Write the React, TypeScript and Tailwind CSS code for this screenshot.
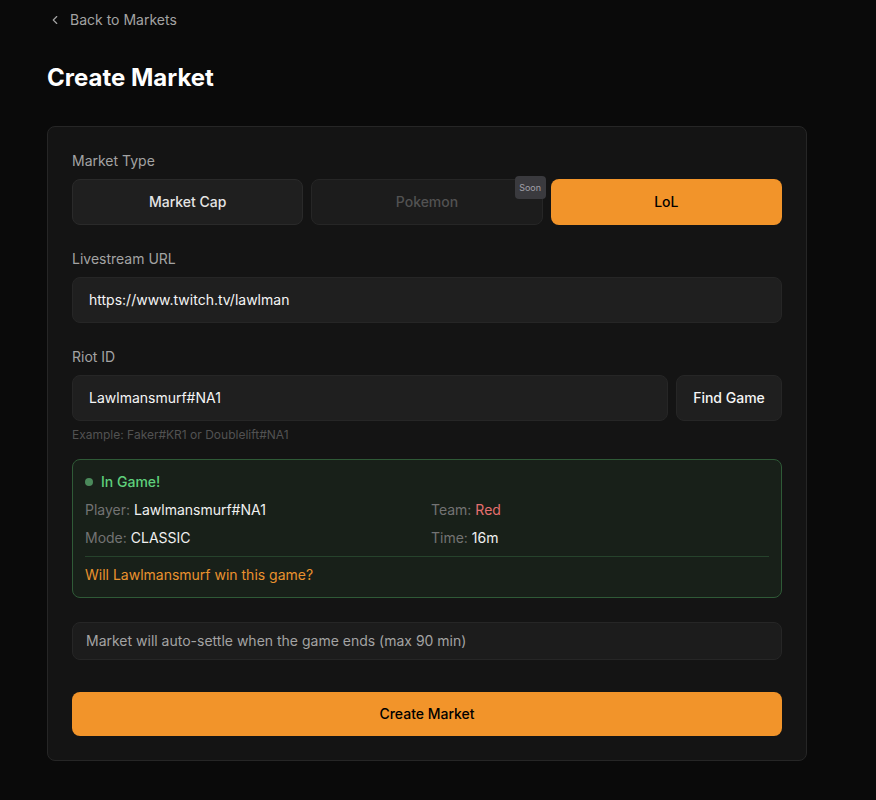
import React from "react";

export default function App() {
  return (
    <div
      className="min-h-[800px] w-full bg-[#0a0a0a] text-white"
      style={{ fontFamily: "Inter, 'Noto Sans', sans-serif" }}
    >
      <div className="pl-[47px] pt-[10px] pb-10">
        <button className="flex h-5 items-center gap-[8px] pl-[1px] text-sm text-[#a3a3a3]">
          <svg width="14" height="14" viewBox="0 0 24 24" fill="none" stroke="currentColor" strokeWidth="2" strokeLinecap="round" strokeLinejoin="round">
            <path d="m15 18-6-6 6-6" />
          </svg>
          <span>Back to Markets</span>
        </button>

        <h1 className="mt-8 text-2xl font-bold leading-8 text-white">Create Market</h1>

        <div className="mt-8 w-[760px] rounded-lg border border-[#262626] bg-[#141414] p-6">
          <div className="text-sm leading-5 text-[#a3a3a3]">Market Type</div>
          <div className="mt-2 grid grid-cols-3 gap-2">
            <button className="h-[46px] rounded-lg border border-[#2a2a2a] bg-[#1f1f1f] text-sm font-medium text-[#e5e5e5]">
              Market Cap
            </button>
            <div className="relative">
              <button className="h-[46px] w-full rounded-lg border border-[#262626] bg-[#1c1c1c] text-sm font-medium text-[#525252]">
                Pokemon
              </button>
              <span className="absolute right-[-3px] top-[-3px] flex h-[23px] w-[31px] items-center justify-center rounded bg-[#3a3a3e] text-[9px] text-[#a1a1aa]">
                Soon
              </span>
            </div>
            <button className="h-[46px] rounded-lg bg-[#f2942a] text-sm font-medium text-black">
              LoL
            </button>
          </div>

          <div className="mt-6 text-sm leading-5 text-[#a3a3a3]">Livestream URL</div>
          <div className="mt-2 flex h-[46px] items-center rounded-lg border border-[#262626] bg-[#1f1f1f] px-4 text-sm text-[#f5f5f5]">
            https://www.twitch.tv/lawlman
          </div>

          <div className="mt-6 text-sm leading-5 text-[#a3a3a3]">Riot ID</div>
          <div className="mt-2 flex gap-2">
            <div className="flex h-[46px] flex-1 items-center rounded-lg border border-[#262626] bg-[#1f1f1f] px-4 text-sm text-[#f5f5f5]">
              Lawlmansmurf#NA1
            </div>
            <button className="h-[46px] w-[106px] rounded-lg border border-[#262626] bg-[#1f1f1f] text-sm font-medium text-[#f5f5f5]">
              Find Game
            </button>
          </div>
          <div className="mt-[6px] text-xs leading-4 text-[#525252]">Example: Faker#KR1 or Doublelift#NA1</div>

          <div className="mt-4 rounded-lg border border-[#2f5a37] bg-[#182019] p-3 text-sm leading-5">
            <div className="flex items-center gap-2 font-medium text-[#5fd07c]">
              <span className="h-2 w-2 rounded-full bg-[#4b8a5b]" />
              <span>In Game!</span>
            </div>
            <div className="mt-2 grid grid-cols-2 gap-x-2 gap-y-2">
              <div>
                <span className="text-[#737373]">Player: </span>
                <span className="text-[#f0f0f0]">Lawlmansmurf#NA1</span>
              </div>
              <div>
                <span className="text-[#737373]">Team: </span>
                <span className="text-[#e46f6f]">Red</span>
              </div>
              <div>
                <span className="text-[#737373]">Mode: </span>
                <span className="text-[#f0f0f0]">CLASSIC</span>
              </div>
              <div>
                <span className="text-[#737373]">Time: </span>
                <span className="text-[#f0f0f0]">16m</span>
              </div>
            </div>
            <div className="mt-2 border-t border-[#26432c] pt-2 text-[#ea922e]">
              Will Lawlmansmurf win this game?
            </div>
          </div>

          <div className="mt-6 flex h-[38px] items-center rounded-lg border border-[#262626] bg-[#1c1c1c] px-[13px] text-sm text-[#a3a3a3]">
            Market will auto-settle when the game ends (max 90 min)
          </div>

          <button className="mt-8 h-[44px] w-full rounded-lg bg-[#f2942a] text-sm font-medium text-black">
            Create Market
          </button>
        </div>
      </div>
    </div>
  );
}
